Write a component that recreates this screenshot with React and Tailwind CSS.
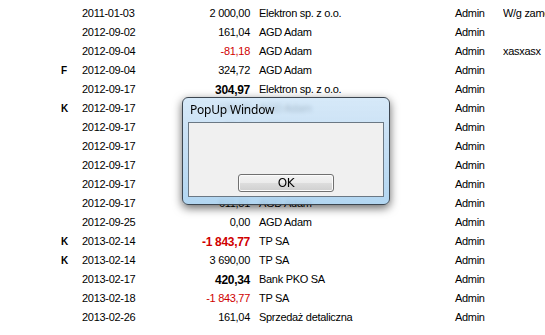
import React from 'react';

const rows = [
  { date: '2011-01-03', amount: '2 000,00', firm: 'Elektron sp. z o.o.', user: 'Admin', note: 'W/g zamówienia' },
  { date: '2011-01-03', amount: '2 000,00', firm: 'Elektron sp. z o.o.', user: 'Admin', note: 'W/g zamówienia' },
  { date: '2012-09-02', amount: '161,04', firm: 'AGD Adam', user: 'Admin' },
  { date: '2012-09-04', amount: '-81,18', red: true, firm: 'AGD Adam', user: 'Admin', note: 'xasxasx' },
  { mark: 'F', date: '2012-09-04', amount: '324,72', firm: 'AGD Adam', user: 'Admin' },
  { date: '2012-09-17', amount: '304,97', bold: true, firm: 'Elektron sp. z o.o.', user: 'Admin' },
  { mark: 'K', date: '2012-09-17', amount: '120,00', firm: 'AGD Adam', user: 'Admin' },
  { date: '2012-09-17', amount: '98,40', firm: 'AGD Adam', user: 'Admin' },
  { date: '2012-09-17', amount: '250,00', firm: 'AGD Adam', user: 'Admin' },
  { date: '2012-09-17', amount: '75,12', firm: 'AGD Adam', user: 'Admin' },
  { date: '2012-09-17', amount: '410,00', firm: 'AGD Adam', user: 'Admin' },
  { date: '2012-09-17', amount: '611,51', firm: 'AGD Adam', user: 'Admin' },
  { date: '2012-09-25', amount: '0,00', firm: 'AGD Adam', user: 'Admin' },
  { mark: 'K', date: '2013-02-14', amount: '-1 843,77', red: true, bold: true, firm: 'TP SA', user: 'Admin' },
  { mark: 'K', date: '2013-02-14', amount: '3 690,00', firm: 'TP SA', user: 'Admin' },
  { date: '2013-02-17', amount: '420,34', bold: true, firm: 'Bank PKO SA', user: 'Admin' },
  { date: '2013-02-18', amount: '-1 843,77', red: true, firm: 'TP SA', user: 'Admin' },
  { date: '2013-02-26', amount: '161,04', firm: 'Sprzedaż detaliczna', user: 'Admin' },
];

function Row({ r }) {
  return (
    <div className="flex h-[19px] items-center whitespace-nowrap">
      <div className="w-[82px] pl-[61px] font-bold text-[10px]">{r.mark}</div>
      <div className="w-[110px]">{r.date}</div>
      <div
        className={
          'w-[58px] text-right ' +
          (r.red ? 'text-[#d00000] ' : '') +
          (r.bold ? 'font-bold text-[12px]' : '')
        }
      >
        {r.amount}
      </div>
      <div className="w-[205px] pl-[9px]">{r.firm}</div>
      <div className="w-[48px]">{r.user}</div>
      <div className="flex-1 overflow-hidden">{r.note}</div>
    </div>
  );
}

function PopUp() {
  return (
    <div className="absolute left-[182px] top-[97px] w-[208px] h-[108px] rounded-[6px] border border-[#3c4650] bg-[linear-gradient(180deg,rgba(205,228,247,0.82)_0%,rgba(190,218,242,0.85)_40%,rgba(170,210,240,0.9)_100%)] backdrop-blur-[2px] shadow-[0_3px_10px_rgba(0,0,0,0.6)] flex flex-col px-[5px] pb-[7px]">
      <div className="h-[24px] flex items-center pl-[2px] text-[12px] text-black font-['Noto_Sans',sans-serif] tracking-[-0.2px]">
        PopUp Window
      </div>
      <div className="flex-1 bg-[#f0f0f0] border border-[#6b7884] flex flex-col items-center justify-end pb-[4px]">
        <button className="w-[96px] h-[18px] border border-[#707070] rounded-[3px] bg-[linear-gradient(180deg,#f3f3f3_0%,#ebebeb_50%,#dddddd_51%,#cfcfcf_100%)] text-[12px] leading-none text-black font-['DejaVu_Sans',sans-serif] shadow-[inset_0_0_0_1px_#fcfcfc]">
          OK
        </button>
      </div>
    </div>
  );
}

export default function App() {
  return (
    <div className="relative w-[545px] h-[335px] overflow-hidden bg-white text-black text-[11px] tracking-[-0.3px] font-['Liberation_Sans',Arial,sans-serif]">
      <div className="-mt-[15px] flex flex-col">
        {rows.map((r, i) => (
          <Row key={i} r={r} />
        ))}
      </div>
      <PopUp />
    </div>
  );
}
